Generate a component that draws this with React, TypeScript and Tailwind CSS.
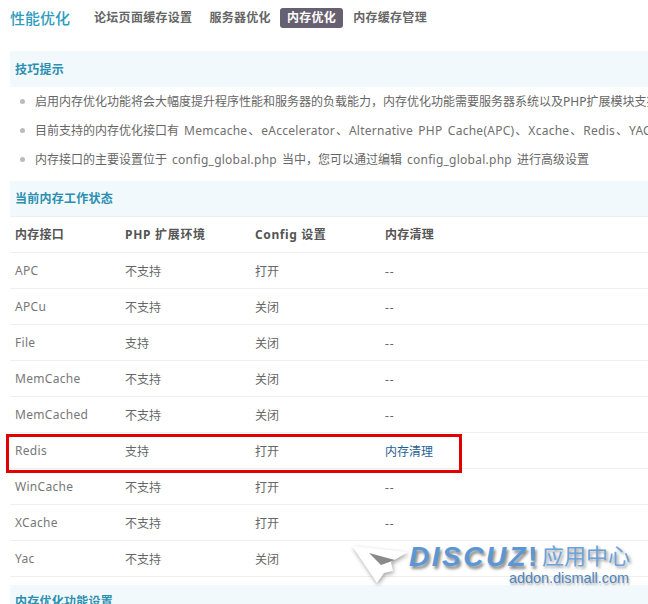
import React from 'react';

const rows = [
  ['APC', '不支持', '打开', '--'],
  ['APCu', '不支持', '关闭', '--'],
  ['File', '支持', '关闭', '--'],
  ['MemCache', '不支持', '关闭', '--'],
  ['MemCached', '不支持', '关闭', '--'],
  ['Redis', '支持', '打开', '内存清理'],
  ['WinCache', '不支持', '打开', '--'],
  ['XCache', '不支持', '打开', '--'],
  ['Yac', '不支持', '关闭', '--'],
];

// 西文片段：字距略宽，与中文之间留空
const Lat: React.FC<{ children: React.ReactNode }> = ({ children }) => (
  <span className="tracking-[0.25px] [word-spacing:2px] text-[#6f6f6f] mx-[1px]">{children}</span>
);
const Gap: React.FC = () => <span className="inline-block w-[4px]"></span>;

const App: React.FC = () => {
  return (
    <div className="relative w-[648px] h-[604px] overflow-hidden bg-white text-[12px] text-[#666] font-['Noto_Sans','Noto_Sans_CJK_SC',sans-serif]">
      {/* 顶部导航 */}
      <div className="flex items-center h-[51px] pl-[10px] pb-[15px]">
        <span className="w-[84px] text-[15px] font-medium text-[#2b9cc0]">性能优化</span>
        <span className="text-[12px] font-bold text-[#666] tracking-[0.3px] mr-[17px]">论坛页面缓存设置</span>
        <span className="text-[12px] font-bold text-[#666] tracking-[0.3px] mr-[9px]">服务器优化</span>
        <span className="text-[12px] font-bold text-white tracking-[0.3px] bg-[#666070] rounded-[3px] px-[7px] h-[20px] leading-[19px]">内存优化</span>
        <span className="ml-[10px] text-[12px] font-bold text-[#666] tracking-[0.3px]">内存缓存管理</span>
      </div>

      <div className="ml-[10px] w-[700px]">
        {/* 技巧提示 */}
        <div className="h-[36px] leading-[37px] px-[5px] bg-[#f2f9fd] font-bold text-[#2b8fb0] tracking-[0.25px]">技巧提示</div>
        <ul className="pb-[7px]">
          <li className="flex items-center h-[29px] pl-[10px] whitespace-nowrap">
            <span className="shrink-0 w-[5px] h-[5px] rounded-full bg-[#bbb] mr-[10px]"></span>
            <span>启用内存优化功能将会大幅度提升程序性能和服务器的负载能力，内存优化功能需要服务器系统以及PHP扩展模块支持</span>
          </li>
          <li className="flex items-center h-[29px] pl-[10px] whitespace-nowrap">
            <span className="shrink-0 w-[5px] h-[5px] rounded-full bg-[#bbb] mr-[10px]"></span>
            <span>目前支持的内存优化接口有<Gap /><Lat>Memcache</Lat>、<Lat>eAccelerator</Lat>、<Lat>Alternative PHP Cache(APC)</Lat>、<Lat>Xcache</Lat>、<Lat>Redis</Lat>、<Lat>YAC</Lat>、<Lat>APCu</Lat></span>
          </li>
          <li className="flex items-center h-[29px] pl-[10px] whitespace-nowrap">
            <span className="shrink-0 w-[5px] h-[5px] rounded-full bg-[#bbb] mr-[10px]"></span>
            <span>内存接口的主要设置位于<Gap /><Lat>config_global.php</Lat><Gap />当中，您可以通过编辑<Gap /><Lat>config_global.php</Lat><Gap />进行高级设置</span>
          </li>
        </ul>

        {/* 当前内存工作状态 */}
        <div className="h-[36px] leading-[36px] px-[5px] bg-[#f2f9fd] font-bold text-[#2b8fb0] tracking-[0.25px] border-b border-[#e6f0f6]">当前内存工作状态</div>
        <div className="flex h-[36px] items-center border-b border-[#f0f0f0] font-bold text-[#555]">
          <div className="w-[110px] pl-[5px] tracking-[0.25px]">内存接口</div>
          <div className="w-[130px] pl-[5px] tracking-[0.7px]">PHP 扩展环境</div>
          <div className="w-[130px] pl-[5px] tracking-[0.6px]">Config 设置</div>
          <div className="pl-[5px] tracking-[0.25px]">内存清理</div>
        </div>
        {rows.map((row) => (
          <div key={row[0]} className="flex h-[36px] items-center border-b border-[#f0f0f0]">
            <div className="w-[110px] pl-[5px] text-[#777] tracking-[0.3px]">{row[0]}</div>
            <div className="w-[130px] pl-[5px] mt-[2px]">{row[1]}</div>
            <div className="w-[130px] pl-[5px] mt-[2px]">{row[2]}</div>
            <div className={row[3] === '--' ? 'pl-[5px] mt-[2px] tracking-[1px]' : 'pl-[5px] mt-[2px] text-[#1f5f95]'}>{row[3]}</div>
          </div>
        ))}

        {/* 内存优化功能设置 */}
        <div className="mt-[8px] h-[36px] leading-[34px] px-[5px] bg-[#f2f9fd] font-bold text-[#2b8fb0] tracking-[0.25px]">内存优化功能设置</div>
      </div>

      {/* 红框标注 */}
      <div className="absolute left-[6px] top-[434px] w-[456px] h-[39px] border-[3px] border-[#e00000]"></div>

      {/* 水印 */}
      <div className="absolute left-[345px] top-[538px] w-[303px] h-[60px]">
        <svg className="absolute left-0 top-0 drop-shadow-[1px_2px_2px_rgba(0,0,0,0.35)]" width="66" height="50" viewBox="0 0 66 50">
          <path d="M7 8 L63 14 L46 24 L48 33 L39 35 L32 45 Z" fill="#ffffff" />
          <path d="M24 15 L50 22 L36 27 Z" fill="#8a8a8a" />
        </svg>
        <span className="absolute left-[64px] top-[3px] text-[28px] leading-[32px] font-bold italic tracking-[2.5px] text-[#5b97d6] [text-shadow:2px_3px_3px_#8a8a8a] font-['Liberation_Sans',sans-serif]">DISCUZ</span>
        <span className="absolute left-[183px] top-[3px] text-[28px] leading-[32px] font-bold text-[#5b97d6] [text-shadow:2px_3px_3px_#8a8a8a] font-['Liberation_Sans',sans-serif]">!</span>
        <span className="absolute left-[197px] top-[4px] text-[22px] leading-[26px] text-[#6aa2dc] [text-shadow:2px_2px_3px_#999]">应用中心</span>
        <span className="absolute left-[164px] top-[31px] text-[14.4px] leading-[18px] text-[#4f86bd] [text-shadow:1px_2px_2px_#aaa] font-['Liberation_Sans',sans-serif]">addon.dismall.com</span>
      </div>
    </div>
  );
};

export default App;
